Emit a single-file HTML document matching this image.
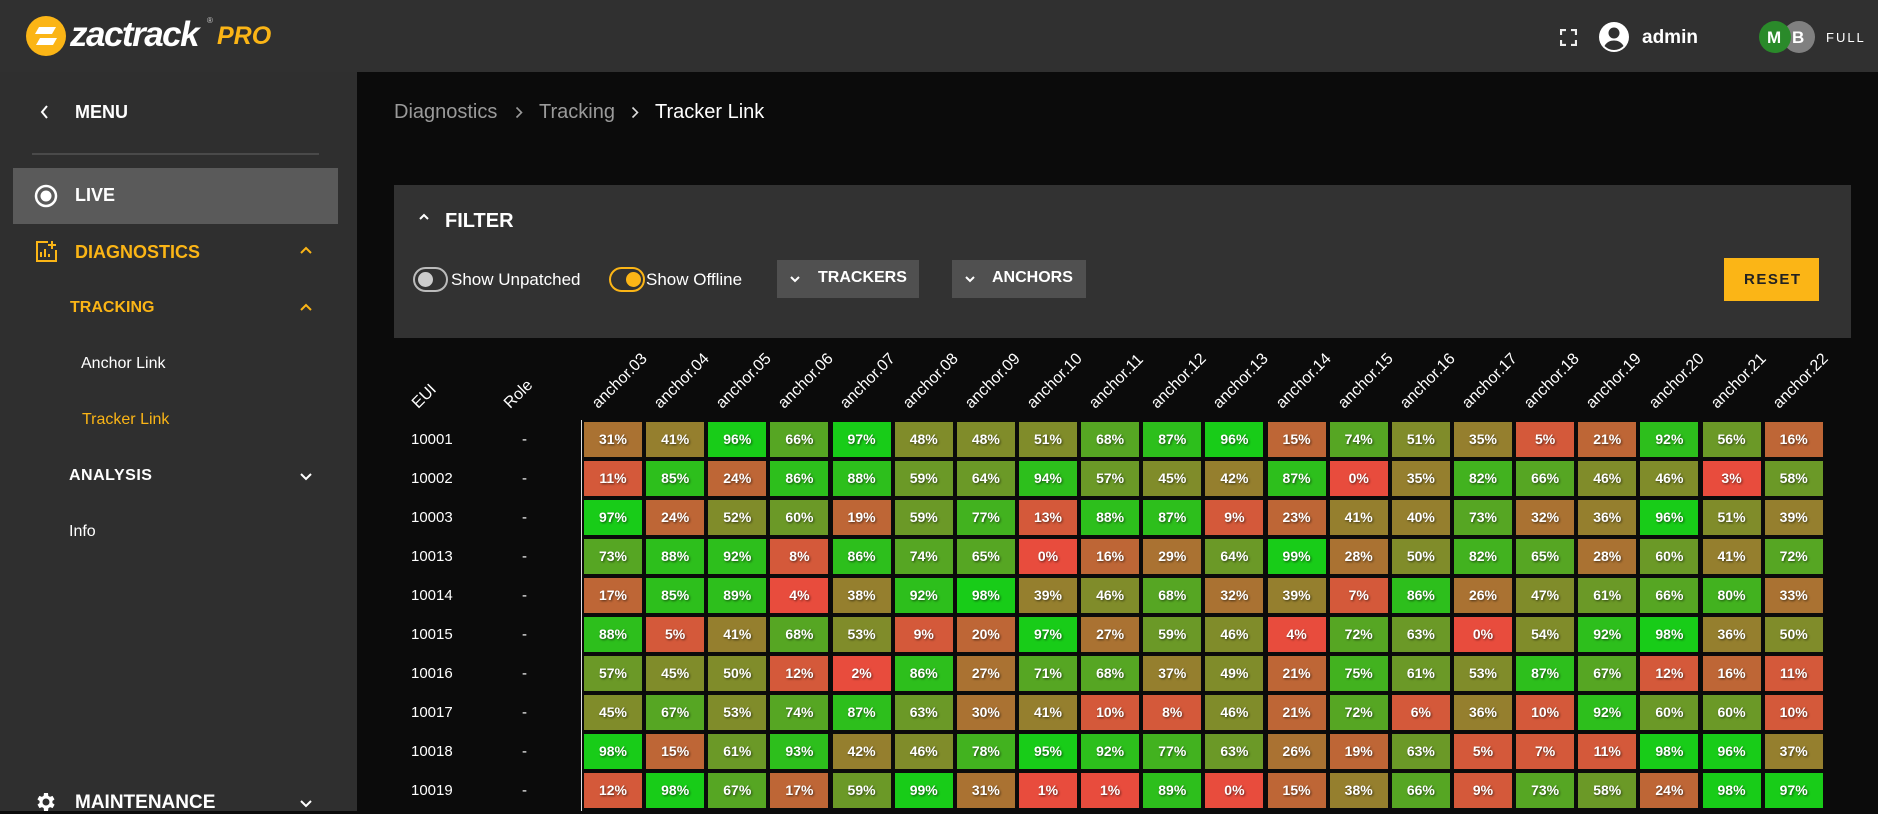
<!DOCTYPE html>
<html><head><meta charset="utf-8">
<style>
*{margin:0;padding:0;box-sizing:border-box}
body{width:1878px;height:811px;overflow:hidden;background:#0b0b0b;font-family:"Liberation Sans",Arial,sans-serif;color:#fff;position:relative}
.hdr{position:absolute;left:0;top:0;width:1878px;height:72px;background:#303030}
.side{position:absolute;left:0;top:72px;width:357px;height:739px;background:#2f2f2f}
.a{position:absolute;white-space:nowrap}
.b{font-weight:bold}
.or{color:#fbb516}
.grid{position:absolute;left:584px;top:422px;display:grid;grid-template-columns:repeat(20,58px);column-gap:4.15px;row-gap:4px}
.grid div{height:35px;line-height:35px;text-align:center;font-weight:bold;font-size:14px;text-shadow:1px 1px 2px rgba(0,0,0,.6)}
.c0{background:#e84c3d}.c1{background:#d4593a}.c2{background:#be6636}.c3{background:#aa7232}.c4{background:#957f2e}.c5{background:#808c2a}.c6{background:#6b9927}.c7{background:#56a623}.c8{background:#42b21f}.c9{background:#2dbf1c}.c10{background:#18cc18}
.lab{position:absolute;top:412px;font-size:16px;transform-origin:0 100%;transform:rotate(-45deg);white-space:nowrap;line-height:16px;margin-top:-16px}
.eui{position:absolute;left:411px;font-size:15px;width:60px}
.dash{position:absolute;left:522px;font-size:15px}
.bc{position:absolute;top:101px;font-size:20px;color:#9a9a9a;white-space:nowrap}
</style></head><body>
<div class="hdr"></div>
<svg class="a" style="left:26px;top:16px" width="40" height="40" viewBox="0 0 40 40"><circle cx="20" cy="20" r="20" fill="#fbb516"/><path d="M13 11h17l-4 7H9z" fill="#fff"/><path d="M14 22h17l-4 7H10z" fill="#fff"/></svg>
<div class="a b" style="left:70px;top:15px;font-size:35px;font-style:italic;letter-spacing:-1.5px;line-height:40px">zactrack</div>
<div class="a" style="left:207px;top:16px;font-size:8px;color:#ccc">®</div>
<div class="a b or" style="left:217px;top:22px;font-size:25px;font-style:italic;line-height:28px">PRO</div>
<svg class="a" style="left:1560px;top:29px" width="17" height="17" viewBox="0 0 17 17" fill="none" stroke="#eee" stroke-width="2.2"><path d="M1 6V1h5M11 1h5v5M16 11v5h-5M6 16H1v-5"/></svg>
<svg class="a" style="left:1599px;top:22px" width="30" height="30" viewBox="0 0 30 30"><circle cx="15" cy="15" r="15" fill="#fff"/><circle cx="15" cy="11" r="5.5" fill="#303030"/><path d="M5.5 24c2-4 6-5.5 9.5-5.5s7.5 1.5 9.5 5.5c-2.5 2.5-6 4-9.5 4s-7-1.5-9.5-4z" fill="#303030"/></svg>
<div class="a b" style="left:1642px;top:27px;font-size:19px">admin</div>
<div class="a" style="left:1783px;top:21px;width:32px;height:32px;border-radius:50%;background:#808080"></div>
<div class="a b" style="left:1792px;top:28px;font-size:17px">B</div>
<div class="a" style="left:1759px;top:21px;width:32px;height:32px;border-radius:50%;background:#2a8a2a"></div>
<div class="a b" style="left:1767px;top:28px;font-size:17px">M</div>
<div class="a" style="left:1826px;top:30px;font-size:13px;letter-spacing:2px">FULL</div>

<div class="side"></div>
<svg class="a" style="left:39px;top:104px" width="10" height="16" viewBox="0 0 10 16" fill="none" stroke="#fff" stroke-width="2"><path d="M8 2L3 8l5 6"/></svg>
<div class="a b" style="left:75px;top:102px;font-size:18px">MENU</div>
<div class="a" style="left:32px;top:153px;width:287px;height:2px;background:#4a4a4a"></div>
<div class="a" style="left:13px;top:168px;width:325px;height:56px;background:#5a5a5a"></div>
<svg class="a" style="left:34px;top:184px" width="24" height="24" viewBox="0 0 24 24"><circle cx="12" cy="12" r="10" fill="none" stroke="#fff" stroke-width="2.5"/><circle cx="12" cy="12" r="5.5" fill="#fff"/></svg>
<div class="a b" style="left:75px;top:185px;font-size:18px">LIVE</div>
<svg class="a" style="left:35px;top:240px" width="23" height="23" viewBox="0 0 23 23" fill="none" stroke="#fbb516" stroke-width="2"><path d="M13 2H2v19h19V10"/><path d="M6 17v-5M10 17V9M14 17v-3M17 1v8M13 5h8"/></svg>
<div class="a b or" style="left:75px;top:242px;font-size:18px">DIAGNOSTICS</div>
<svg class="a" style="left:299px;top:246px" width="14" height="9" viewBox="0 0 14 9" fill="none" stroke="#fbb516" stroke-width="2"><path d="M2 7l5-5 5 5"/></svg>
<div class="a b or" style="left:70px;top:299px;font-size:16px">TRACKING</div>
<svg class="a" style="left:299px;top:303px" width="14" height="9" viewBox="0 0 14 9" fill="none" stroke="#fbb516" stroke-width="2"><path d="M2 7l5-5 5 5"/></svg>
<div class="a" style="left:81px;top:355px;font-size:16px">Anchor Link</div>
<div class="a or" style="left:82px;top:411px;font-size:16px">Tracker Link</div>
<div class="a b" style="left:69px;top:467px;font-size:16px;letter-spacing:.5px">ANALYSIS</div>
<svg class="a" style="left:299px;top:472px" width="14" height="9" viewBox="0 0 14 9" fill="none" stroke="#fff" stroke-width="2"><path d="M2 2l5 5 5-5"/></svg>
<div class="a" style="left:69px;top:523px;font-size:16px">Info</div>
<svg class="a" style="left:34px;top:790px" width="24" height="24" viewBox="0 0 24 24"><path fill="#fff" d="M19.4 13a7.5 7.5 0 000-2l2.1-1.6-2-3.5-2.5 1a7.5 7.5 0 00-1.7-1L15 3h-4l-.4 2.9a7.5 7.5 0 00-1.7 1l-2.5-1-2 3.5L6.6 11a7.5 7.5 0 000 2l-2.1 1.6 2 3.5 2.5-1a7.5 7.5 0 001.7 1L11 21h4l.4-2.9a7.5 7.5 0 001.7-1l2.5 1 2-3.5zM13 15.5a3.5 3.5 0 110-7 3.5 3.5 0 010 7z" transform="translate(-1 0)"/></svg>
<div class="a b" style="left:75px;top:792px;font-size:19px">MAINTENANCE</div>
<svg class="a" style="left:299px;top:799px" width="14" height="9" viewBox="0 0 14 9" fill="none" stroke="#fff" stroke-width="2"><path d="M2 2l5 5 5-5"/></svg>

<div class="bc" style="left:394px">Diagnostics</div>
<svg class="a" style="left:515px;top:106px" width="8" height="13" viewBox="0 0 8 13" fill="none" stroke="#9a9a9a" stroke-width="1.6"><path d="M1.5 1.5l5 5-5 5"/></svg>
<div class="bc" style="left:539px">Tracking</div>
<svg class="a" style="left:631px;top:106px" width="8" height="13" viewBox="0 0 8 13" fill="none" stroke="#ddd" stroke-width="1.6"><path d="M1.5 1.5l5 5-5 5"/></svg>
<div class="bc" style="left:655px;color:#fff">Tracker Link</div>

<div class="a" style="left:394px;top:185px;width:1457px;height:153px;background:#323232"></div>
<svg class="a" style="left:418px;top:213px" width="12" height="8" viewBox="0 0 12 8" fill="none" stroke="#fff" stroke-width="2"><path d="M2 6l4-4 4 4"/></svg>
<div class="a b" style="left:445px;top:210px;font-size:20px">FILTER</div>
<div class="a" style="left:413px;top:267px;width:35px;height:25px;border:2px solid #bbb;border-radius:13px"></div>
<div class="a" style="left:418px;top:272px;width:15px;height:15px;border-radius:50%;background:#ccc"></div>
<div class="a" style="left:451px;top:270px;font-size:17px">Show Unpatched</div>
<div class="a" style="left:609px;top:267px;width:36px;height:25px;border:2px solid #fbb516;border-radius:13px"></div>
<div class="a" style="left:626px;top:272px;width:15px;height:15px;border-radius:50%;background:#fbb516"></div>
<div class="a" style="left:646px;top:270px;font-size:17px">Show Offline</div>
<div class="a" style="left:777px;top:260px;width:142px;height:38px;background:#505050"></div>
<svg class="a" style="left:789px;top:275px" width="12" height="8" viewBox="0 0 12 8" fill="none" stroke="#fff" stroke-width="2"><path d="M2 2l4 4 4-4"/></svg>
<div class="a b" style="left:818px;top:269px;font-size:16px">TRACKERS</div>
<div class="a" style="left:952px;top:260px;width:134px;height:38px;background:#505050"></div>
<svg class="a" style="left:964px;top:275px" width="12" height="8" viewBox="0 0 12 8" fill="none" stroke="#fff" stroke-width="2"><path d="M2 2l4 4 4-4"/></svg>
<div class="a b" style="left:992px;top:269px;font-size:16px">ANCHORS</div>
<div class="a" style="left:1724px;top:258px;width:95px;height:43px;background:#fbb516"></div>
<div class="a b" style="left:1744px;top:271px;font-size:15px;color:#222;letter-spacing:1.5px">RESET</div>

<div class="lab" style="left:421px">EUI</div>
<div class="lab" style="left:513px">Role</div>
<div class="lab" style="left:601px">anchor.03</div><div class="lab" style="left:663px">anchor.04</div><div class="lab" style="left:725px">anchor.05</div><div class="lab" style="left:787px">anchor.06</div><div class="lab" style="left:849px">anchor.07</div><div class="lab" style="left:912px">anchor.08</div><div class="lab" style="left:974px">anchor.09</div><div class="lab" style="left:1036px">anchor.10</div><div class="lab" style="left:1098px">anchor.11</div><div class="lab" style="left:1160px">anchor.12</div><div class="lab" style="left:1222px">anchor.13</div><div class="lab" style="left:1285px">anchor.14</div><div class="lab" style="left:1347px">anchor.15</div><div class="lab" style="left:1409px">anchor.16</div><div class="lab" style="left:1471px">anchor.17</div><div class="lab" style="left:1533px">anchor.18</div><div class="lab" style="left:1595px">anchor.19</div><div class="lab" style="left:1658px">anchor.20</div><div class="lab" style="left:1720px">anchor.21</div><div class="lab" style="left:1782px">anchor.22</div>

<div class="a" style="left:581px;top:420px;width:1px;height:391px;background:#ddd"></div>

<div class="eui" style="top:431px">10001</div><div class="dash" style="top:431px">-</div>
<div class="eui" style="top:470px">10002</div><div class="dash" style="top:470px">-</div>
<div class="eui" style="top:509px">10003</div><div class="dash" style="top:509px">-</div>
<div class="eui" style="top:548px">10013</div><div class="dash" style="top:548px">-</div>
<div class="eui" style="top:587px">10014</div><div class="dash" style="top:587px">-</div>
<div class="eui" style="top:626px">10015</div><div class="dash" style="top:626px">-</div>
<div class="eui" style="top:665px">10016</div><div class="dash" style="top:665px">-</div>
<div class="eui" style="top:704px">10017</div><div class="dash" style="top:704px">-</div>
<div class="eui" style="top:743px">10018</div><div class="dash" style="top:743px">-</div>
<div class="eui" style="top:782px">10019</div><div class="dash" style="top:782px">-</div>

<div class="grid">
<div class="c3">31%</div><div class="c4">41%</div><div class="c10">96%</div><div class="c7">66%</div><div class="c10">97%</div><div class="c5">48%</div><div class="c5">48%</div><div class="c5">51%</div><div class="c7">68%</div><div class="c9">87%</div><div class="c10">96%</div><div class="c2">15%</div><div class="c7">74%</div><div class="c5">51%</div><div class="c4">35%</div><div class="c1">5%</div><div class="c2">21%</div><div class="c9">92%</div><div class="c6">56%</div><div class="c2">16%</div>
<div class="c1">11%</div><div class="c9">85%</div><div class="c2">24%</div><div class="c9">86%</div><div class="c9">88%</div><div class="c6">59%</div><div class="c6">64%</div><div class="c9">94%</div><div class="c6">57%</div><div class="c5">45%</div><div class="c4">42%</div><div class="c9">87%</div><div class="c0">0%</div><div class="c4">35%</div><div class="c8">82%</div><div class="c7">66%</div><div class="c5">46%</div><div class="c5">46%</div><div class="c0">3%</div><div class="c6">58%</div>
<div class="c10">97%</div><div class="c2">24%</div><div class="c5">52%</div><div class="c6">60%</div><div class="c2">19%</div><div class="c6">59%</div><div class="c8">77%</div><div class="c1">13%</div><div class="c9">88%</div><div class="c9">87%</div><div class="c1">9%</div><div class="c2">23%</div><div class="c4">41%</div><div class="c4">40%</div><div class="c7">73%</div><div class="c3">32%</div><div class="c4">36%</div><div class="c10">96%</div><div class="c5">51%</div><div class="c4">39%</div>
<div class="c7">73%</div><div class="c9">88%</div><div class="c9">92%</div><div class="c1">8%</div><div class="c9">86%</div><div class="c7">74%</div><div class="c7">65%</div><div class="c0">0%</div><div class="c2">16%</div><div class="c3">29%</div><div class="c6">64%</div><div class="c10">99%</div><div class="c3">28%</div><div class="c5">50%</div><div class="c8">82%</div><div class="c7">65%</div><div class="c3">28%</div><div class="c6">60%</div><div class="c4">41%</div><div class="c7">72%</div>
<div class="c2">17%</div><div class="c9">85%</div><div class="c9">89%</div><div class="c0">4%</div><div class="c4">38%</div><div class="c9">92%</div><div class="c10">98%</div><div class="c4">39%</div><div class="c5">46%</div><div class="c7">68%</div><div class="c3">32%</div><div class="c4">39%</div><div class="c1">7%</div><div class="c9">86%</div><div class="c3">26%</div><div class="c5">47%</div><div class="c6">61%</div><div class="c7">66%</div><div class="c8">80%</div><div class="c3">33%</div>
<div class="c9">88%</div><div class="c1">5%</div><div class="c4">41%</div><div class="c7">68%</div><div class="c5">53%</div><div class="c1">9%</div><div class="c2">20%</div><div class="c10">97%</div><div class="c3">27%</div><div class="c6">59%</div><div class="c5">46%</div><div class="c0">4%</div><div class="c7">72%</div><div class="c6">63%</div><div class="c0">0%</div><div class="c5">54%</div><div class="c9">92%</div><div class="c10">98%</div><div class="c4">36%</div><div class="c5">50%</div>
<div class="c6">57%</div><div class="c5">45%</div><div class="c5">50%</div><div class="c1">12%</div><div class="c0">2%</div><div class="c9">86%</div><div class="c3">27%</div><div class="c7">71%</div><div class="c7">68%</div><div class="c4">37%</div><div class="c5">49%</div><div class="c2">21%</div><div class="c8">75%</div><div class="c6">61%</div><div class="c5">53%</div><div class="c9">87%</div><div class="c7">67%</div><div class="c1">12%</div><div class="c2">16%</div><div class="c1">11%</div>
<div class="c5">45%</div><div class="c7">67%</div><div class="c5">53%</div><div class="c7">74%</div><div class="c9">87%</div><div class="c6">63%</div><div class="c3">30%</div><div class="c4">41%</div><div class="c1">10%</div><div class="c1">8%</div><div class="c5">46%</div><div class="c2">21%</div><div class="c7">72%</div><div class="c1">6%</div><div class="c4">36%</div><div class="c1">10%</div><div class="c9">92%</div><div class="c6">60%</div><div class="c6">60%</div><div class="c1">10%</div>
<div class="c10">98%</div><div class="c2">15%</div><div class="c6">61%</div><div class="c9">93%</div><div class="c4">42%</div><div class="c5">46%</div><div class="c8">78%</div><div class="c10">95%</div><div class="c9">92%</div><div class="c8">77%</div><div class="c6">63%</div><div class="c3">26%</div><div class="c2">19%</div><div class="c6">63%</div><div class="c1">5%</div><div class="c1">7%</div><div class="c1">11%</div><div class="c10">98%</div><div class="c10">96%</div><div class="c4">37%</div>
<div class="c1">12%</div><div class="c10">98%</div><div class="c7">67%</div><div class="c2">17%</div><div class="c6">59%</div><div class="c10">99%</div><div class="c3">31%</div><div class="c0">1%</div><div class="c0">1%</div><div class="c9">89%</div><div class="c0">0%</div><div class="c2">15%</div><div class="c4">38%</div><div class="c7">66%</div><div class="c1">9%</div><div class="c7">73%</div><div class="c6">58%</div><div class="c2">24%</div><div class="c10">98%</div><div class="c10">97%</div>
</div>
</body></html>
